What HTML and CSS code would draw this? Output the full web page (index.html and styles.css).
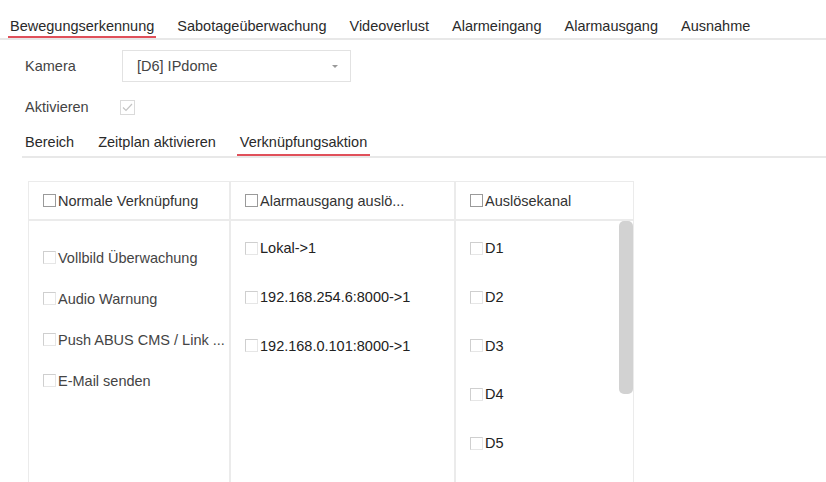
FILE: index.html
```html
<!DOCTYPE html>
<html lang="de">
<head>
    <meta charset="UTF-8" />
    <title>Bewegungserkennung</title>
    <link rel="stylesheet" href="styles.css">
</head>
<body>

<div class="tabbar">
    <span class="tab active">Bewegungserkennung</span>
    <span class="tab">Sabotageüberwachung</span>
    <span class="tab">Videoverlust</span>
    <span class="tab">Alarmeingang</span>
    <span class="tab">Alarmausgang</span>
    <span class="tab">Ausnahme</span>
</div>

<div class="form-row first">
    <span class="label">Kamera</span>
    <div class="dropdown">
        <span>[D6] IPdome</span>
        <span class="arrow"></span>
    </div>
</div>

<div class="form-row">
    <span class="label">Aktivieren</span>
    <span class="check-big">
        <svg width="11" height="9" viewBox="0 0 11 9"><path d="M1 4.5 L4 7.5 L10 1" fill="none" stroke="#c4c4c4" stroke-width="1.2"/></svg>
    </span>
</div>

<div class="subtabs">
    <span class="subtab">Bereich</span>
    <span class="subtab">Zeitplan aktivieren</span>
    <span class="subtab active">Verknüpfungsaktion</span>
</div>

<div class="tabelle">
    <div class="spalte col-normal">
        <div class="kopf"><span class="cb dark"></span>Normale Verknüpfung</div>
        <div class="liste">
            <div class="item"><span class="cb"></span>Vollbild Überwachung</div>
            <div class="item"><span class="cb"></span>Audio Warnung</div>
            <div class="item"><span class="cb"></span>Push ABUS CMS / Link ...</div>
            <div class="item"><span class="cb"></span>E-Mail senden</div>
        </div>
    </div>
    <div class="spalte col-ausgang">
        <div class="kopf"><span class="cb dark"></span>Alarmausgang auslö...</div>
        <div class="liste">
            <div class="item"><span class="cb"></span>Lokal-&gt;1</div>
            <div class="item"><span class="cb"></span>192.168.254.6:8000-&gt;1</div>
            <div class="item"><span class="cb"></span>192.168.0.101:8000-&gt;1</div>
        </div>
    </div>
    <div class="spalte col-kanal">
        <div class="kopf"><span class="cb dark"></span>Auslösekanal</div>
        <div class="liste">
            <div class="item"><span class="cb"></span>D1</div>
            <div class="item"><span class="cb"></span>D2</div>
            <div class="item"><span class="cb"></span>D3</div>
            <div class="item"><span class="cb"></span>D4</div>
            <div class="item"><span class="cb"></span>D5</div>
            <div class="scrollbar"></div>
        </div>
    </div>
</div>

</body>
</html>
```

FILE: styles.css
```css
body {
    margin: 0;
    font-family: "Liberation Sans", Arial, sans-serif;
    font-size: 14.5px;
    color: #333;
    background: #fff;
    overflow: hidden;
}

/* obere Tabs */
.tabbar {
    display: flex;
    gap: 19px;
    padding: 18px 0 0 8px;
    border-bottom: 2px solid #e8e8e8;
}

.tab {
    line-height: 17px;
    padding: 0 2px 1px;
    border-bottom: 2px solid transparent;
    color: #2a2a2a;
}

.tab.active {
    border-bottom-color: #e0505a;
}

/* Formular */
.form-row {
    display: flex;
    align-items: center;
    height: 32px;
    padding-left: 25px;
}

.form-row.first {
    margin-top: 10px;
}

.form-row + .form-row {
    margin-top: 9px;
}

.label {
    width: 95px;
    color: #444;
}

.dropdown {
    display: flex;
    align-items: center;
    justify-content: space-between;
    box-sizing: border-box;
    width: 229px;
    height: 32px;
    margin-left: 2px;
    padding: 0 12px 0 14px;
    border: 1px solid #e2e2e2;
    color: #444;
}

.arrow {
    width: 0;
    height: 0;
    border-left: 3px solid transparent;
    border-right: 3px solid transparent;
    border-top: 3px solid #999;
}

.check-big {
    display: flex;
    align-items: center;
    justify-content: center;
    box-sizing: border-box;
    width: 15px;
    height: 15px;
    border: 1px solid #dadada;
}

/* Untertabs */
.subtabs {
    display: flex;
    gap: 18px;
    margin: 11px 0 0 22px;
    border-bottom: 2px solid #e8e8e8;
}

.subtab {
    line-height: 17px;
    padding: 0 3px 3px;
    border-bottom: 2px solid transparent;
    color: #2a2a2a;
}

.subtab.active {
    border-bottom-color: #e0505a;
}

/* Tabelle */
.tabelle {
    display: flex;
    width: max-content;
    margin: 23px 0 0 28px;
    border: 1px solid #ebebeb;
    border-bottom: none;
}

.spalte + .spalte {
    border-left: 2px solid #ebebeb;
}

.col-normal { width: 200px; }
.col-ausgang { width: 223px; }
.col-kanal { width: 177px; }

.kopf {
    display: flex;
    align-items: center;
    height: 37px;
    padding-left: 14px;
    border-bottom: 2px solid #ebebeb;
    color: #333;
}

.liste {
    position: relative;
    height: 262px;
}

.item {
    display: flex;
    align-items: center;
    padding-left: 14px;
    white-space: nowrap;
}

.col-normal .liste {
    padding-top: 16px;
}

.col-ausgang .liste,
.col-kanal .liste {
    padding-top: 3px;
}

.col-normal .item {
    height: 41px;
    color: #444;
}

.col-ausgang .item,
.col-kanal .item {
    height: 48.7px;
    color: #222;
}

.cb {
    display: inline-block;
    box-sizing: border-box;
    width: 13px;
    height: 13px;
    margin-right: 2px;
    border: 1px solid #cfcfcf;
    border-right-color: #e6e6e6;
    border-bottom-color: #e6e6e6;
}

.cb.dark {
    border: 1px solid #9a9a9a;
}

.scrollbar {
    position: absolute;
    top: 0;
    right: 0;
    width: 14px;
    height: 173px;
    border-radius: 5px;
    background: #d2d2d2;
}
```
